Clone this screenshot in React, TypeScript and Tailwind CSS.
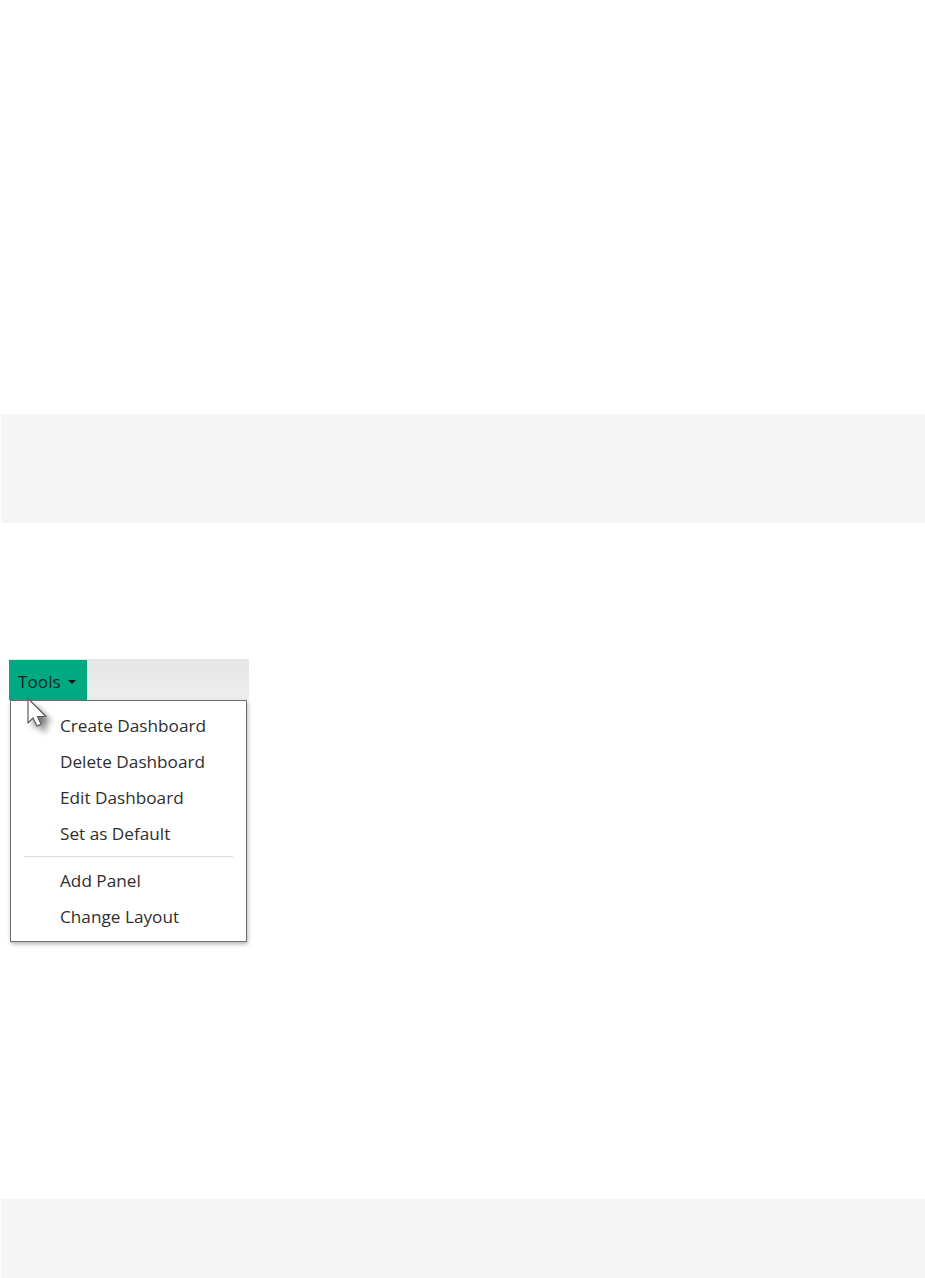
import React from 'react';

const groups = [
  ['Create Dashboard', 'Delete Dashboard', 'Edit Dashboard', 'Set as Default'],
  ['Add Panel', 'Change Layout'],
];

const cursorPath = 'M3 1.5 L3 26 L8 21 L12 29 L16 27 L12.5 19.5 L21 19.5 Z';

function CursorIcon() {
  return (
    <svg
      className="absolute left-[16px] top-[38px]"
      width="40"
      height="44"
      viewBox="0 0 40 44"
    >
      <path
        d={cursorPath}
        fill="#000"
        opacity="0.55"
        transform="translate(6 6)"
        style={{ filter: 'blur(3px)' }}
      />
      <path
        d={cursorPath}
        fill="#fff"
        stroke="#5a5a5a"
        strokeWidth="1.2"
        strokeLinejoin="round"
      />
    </svg>
  );
}

function ToolsMenu() {
  return (
    <div className="relative ml-[9px] w-[240px] font-['Open_Sans',sans-serif]">
      <div className="flex h-[41px] bg-gradient-to-b from-[#e6e6e6] to-[#ededed]">
        <div className="mt-px flex w-[78px] items-center gap-[7px] bg-[#01a982] pl-[9px] pt-[3px] text-[17.2px] text-[#142624]">
          Tools
          <span className="h-0 w-0 border-x-[4px] border-t-[4px] border-x-transparent border-t-[#111]" />
        </div>
      </div>
      <div className="ml-px w-[237px] border border-[#6f6f6f] bg-white pt-[7px] pb-[6px] text-[17.2px] leading-6 text-[#2f2f2f] shadow-[1px_2px_4px_rgba(0,0,0,0.3)]">
        {groups[0].map((item) => (
          <div key={item} className="flex h-9 items-center pl-[49px]">
            {item}
          </div>
        ))}
        <div className="mx-[13px] mt-[4px] mb-[6px] h-px bg-[#dcdcdc]" />
        {groups[1].map((item) => (
          <div key={item} className="flex h-9 items-center pl-[49px]">
            {item}
          </div>
        ))}
      </div>
      <CursorIcon />
    </div>
  );
}

export default function App() {
  return (
    <div className="h-[1278px] overflow-hidden bg-white pt-[414px]">
      <div className="ml-px h-[109px] bg-[#f5f5f5]" />
      <div className="pt-[136px]">
        <ToolsMenu />
      </div>
      <div className="ml-px mt-[257px] h-[79px] bg-[#f5f5f5]" />
    </div>
  );
}
